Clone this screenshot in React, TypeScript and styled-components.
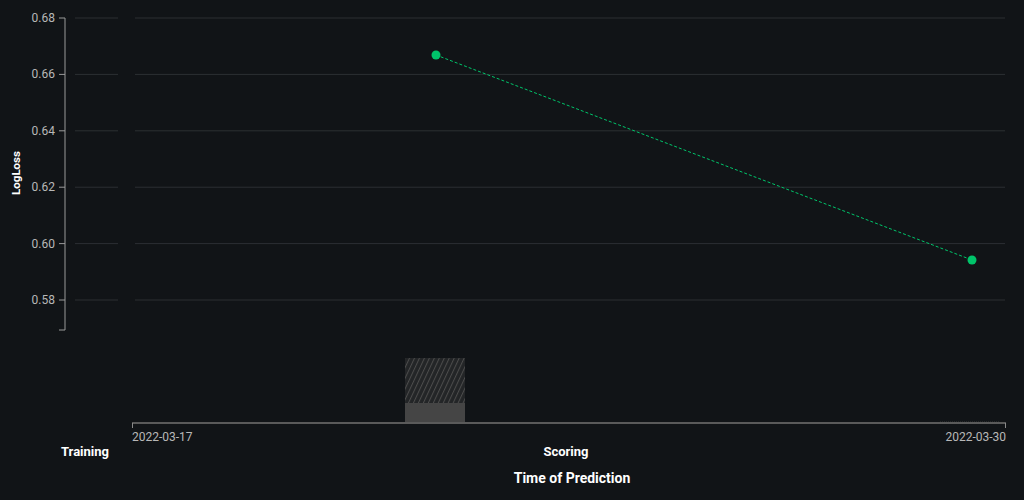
import React from "react";
import styled, { createGlobalStyle } from "styled-components";

const Global = createGlobalStyle`
  html, body { margin: 0; padding: 0; background: #111417; }
  body { font-family: Roboto, "Liberation Sans", sans-serif; }
`;

const Page = styled.div`
  width: 1024px;
  height: 500px;
  background: #111417;
  display: flex;
`;

const Chart = styled.svg`
  display: block;
  font-family: Roboto, "Liberation Sans", sans-serif;
`;

const ticks = [0.68, 0.66, 0.64, 0.62, 0.6, 0.58];
const yOf = (v: number) => 18 + ((0.68 - v) / 0.02) * 56.4;

export default function App() {
  return (
    <Page>
      <Global />
      <Chart width={1024} height={500} viewBox="0 0 1024 500">
        <defs>
          <pattern id="hatch" width="4.5" height="4.5" patternUnits="userSpaceOnUse" patternTransform="rotate(25)">
            <rect width="4.5" height="4.5" fill="#232527" />
            <line x1="0" y1="0" x2="0" y2="4.5" stroke="#4c4c4c" strokeWidth="2" />
          </pattern>
        </defs>
        <line x1="65" y1="18" x2="65" y2="330" stroke="#9a9a9a" strokeWidth="1" />
        <line x1="59" y1="330" x2="65" y2="330" stroke="#9a9a9a" />
        {ticks.map((t) => {
          const y = yOf(t);
          return (
            <g key={t}>
              <line x1="59" y1={y} x2="65" y2={y} stroke="#9a9a9a" />
              <line x1="75" y1={y} x2="118" y2={y} stroke="#2c2f33" />
              <line x1="135" y1={y} x2="1005" y2={y} stroke="#2c2f33" />
              <text x="55" y={y + 4} fill="#b8b8b8" fontSize="12" textAnchor="end">
                {t.toFixed(2)}
              </text>
            </g>
          );
        })}
        <text transform="translate(20,173) rotate(-90)" fill="#fff" fontSize="11.5" fontWeight="700" textAnchor="middle">
          LogLoss
        </text>
        <line x1="436" y1="55" x2="972" y2="260" stroke="#00c46a" strokeWidth="1" strokeDasharray="3 2" />
        <circle cx="436" cy="55" r="4.5" fill="#00c46a" />
        <circle cx="972" cy="260" r="4.5" fill="#00c46a" />
        <rect x="405" y="358" width="60" height="45" fill="url(#hatch)" />
        <rect x="405" y="403" width="60" height="20" fill="#454545" />
        <line x1="940" y1="422" x2="1000" y2="422" stroke="#3a3a3a" strokeDasharray="1 1" />
        <line x1="132" y1="423" x2="1006" y2="423" stroke="#5a5a5a" strokeWidth="2" />
        <line x1="132.5" y1="423" x2="132.5" y2="428" stroke="#8a8a8a" />
        <line x1="1005.5" y1="423" x2="1005.5" y2="428" stroke="#8a8a8a" />
        <text x="132" y="441" fill="#b8b8b8" fontSize="12">2022-03-17</text>
        <text x="1006" y="441" fill="#b8b8b8" fontSize="12" textAnchor="end">2022-03-30</text>
        <text x="85" y="456" fill="#fff" fontSize="13" fontWeight="700" textAnchor="middle">Training</text>
        <text x="566" y="456" fill="#fff" fontSize="13" fontWeight="700" textAnchor="middle">Scoring</text>
        <text x="572" y="483" fill="#fff" fontSize="14" fontWeight="700" textAnchor="middle">Time of Prediction</text>
      </Chart>
    </Page>
  );
}
